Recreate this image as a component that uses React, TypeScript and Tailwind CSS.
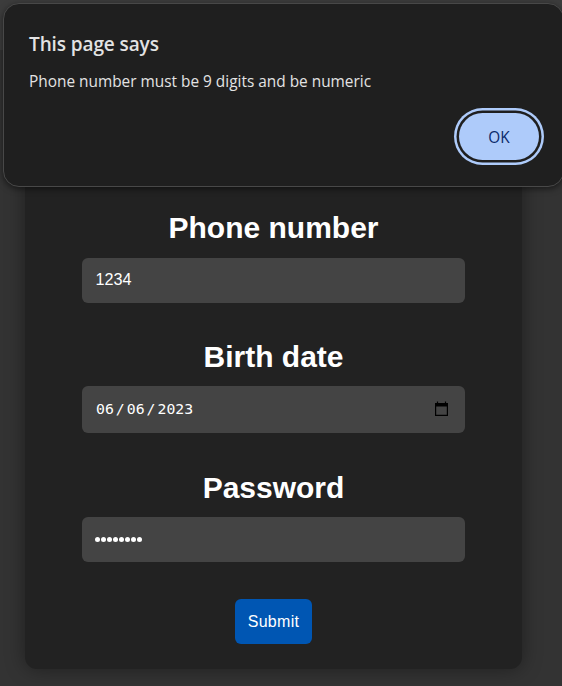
import type { ReactNode } from "react";

function Field({ label, className, children }: { label: string; className: string; children: ReactNode }) {
  return (
    <div className="flex flex-col items-center gap-[11px]">
      <h2 className="h-[37px] pt-px text-[30px] leading-9 font-bold whitespace-nowrap">{label}</h2>
      <div className={`flex w-[383px] items-center rounded-[6px] bg-[#444] pr-4 pl-[13px] ${className}`}>{children}</div>
    </div>
  );
}

function CalendarIcon() {
  return (
    <svg width="15" height="16" viewBox="0 0 15 16" className="-mt-px ml-auto">
      <path d="M1 2h13v13H1zM2.2 5.5v8.3h10.6V5.5z" fill="#000" fillRule="evenodd" />
      <path d="M3.5 0.5v2M11.5 0.5v2" stroke="#000" strokeWidth="1.2" />
    </svg>
  );
}

function AlertDialog() {
  return (
    <div
      role="alertdialog"
      className="absolute top-[3px] left-[3px] flex h-[184px] w-[561px] flex-col rounded-[16px] border border-[#484848] bg-[#1f1f1f] pt-[26px] pr-6 pl-[25px] font-['Open_Sans','Noto_Sans',sans-serif] text-[#e3e3e3] shadow-[0_2px_6px_rgba(0,0,0,0.5)]"
    >
      <h1 className="h-7 text-[19px] leading-7 font-semibold tracking-[-0.1px] whitespace-nowrap">This page says</h1>
      <p className="mt-3 h-6 text-[15.4px] leading-6 whitespace-nowrap">
        Phone number must be 9 digits and be numeric
      </p>
      <button className="mt-[19px] flex h-[47px] w-20 items-center justify-center self-end rounded-full bg-[#aecbfa] pt-0.5 text-[15.4px] font-medium text-[#0b2a6b] shadow-[0_0_0_2.5px_#1f1f1f,0_0_0_5px_#aecbfa]">
        OK
      </button>
    </div>
  );
}

export default function App() {
  return (
    <div className="relative h-[686px] w-[562px] overflow-hidden bg-[#333] font-['Liberation_Sans',Arial,sans-serif] text-white">
      <div className="h-[50px] bg-[#3c3c3c]" />
      <main className="ml-[25px] flex h-[619px] w-[497px] flex-col items-center rounded-[12px] bg-[#222] pt-[159px] shadow-[0_0_20px_rgba(0,0,0,0.4)]">
        <Field label="Phone number" className="mt-px h-[45px]">
          <span className="-mt-[2px] pl-[0.5px] text-[16.2px]">1234</span>
        </Field>
        <div className="h-[35px]" />
        <Field label="Birth date" className="h-[47px]">
          <span className="flex gap-[2px] pl-px font-['DejaVu_Sans_Mono',monospace] text-[14.8px]">
            <span>06</span>
            <span>/</span>
            <span>06</span>
            <span>/</span>
            <span>2023</span>
          </span>
          <CalendarIcon />
        </Field>
        <div className="h-9" />
        <Field label="Password" className="h-[45px]">
          <span className="-mt-px flex gap-[1px]">
            {Array.from({ length: 8 }, (_, i) => (
              <span key={i} className="h-[5px] w-[5px] rounded-full bg-white" />
            ))}
          </span>
        </Field>
        <button className="mt-[37px] h-[45px] w-[77px] rounded-[6px] bg-[#0056b3] text-[16px] tracking-[0.3px]">Submit</button>
      </main>
      <AlertDialog />
    </div>
  );
}
